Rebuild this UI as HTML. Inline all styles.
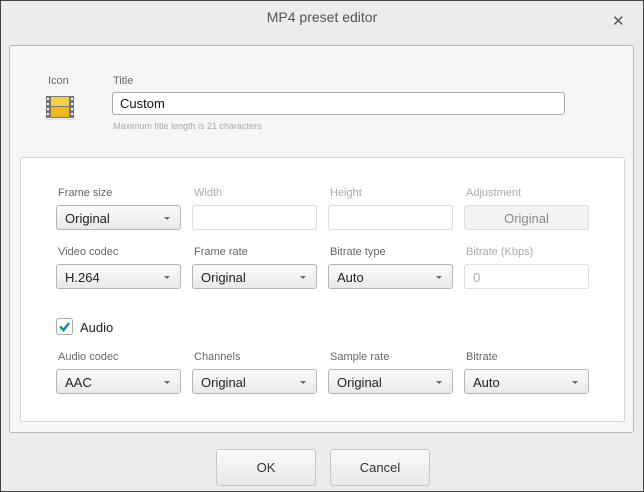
<!DOCTYPE html>
<html><head><style>
*{box-sizing:border-box;margin:0;padding:0}
body{width:644px;height:492px;overflow:hidden;font-family:"Liberation Sans",sans-serif;background:#ececec;position:relative}
.a{position:absolute}
.t{position:absolute;font-size:11px;color:#666}
.d{color:#aaa}
.sel{position:absolute;width:125px;height:25px;border:1px solid #b5b5b5;border-radius:3px;background:linear-gradient(#fbfbfb,#e9e9e9);font-size:13px;color:#222;padding:5px 0 0 8px}
.sel:after{content:"";position:absolute;right:10px;top:11px;border-left:3px solid transparent;border-right:3px solid transparent;border-top:3px solid #666}
.inp{position:absolute;width:125px;height:25px;border:1px solid #ddd;border-radius:3px;background:#fff;font-size:13px;color:#aaa;padding:5px 0 0 8px}
.btn{position:absolute;width:100px;height:37px;border:1px solid #c8c8c8;border-radius:3px;background:linear-gradient(#fafafa,#e8e8e8);font-size:13px;color:#333;text-align:center;line-height:35px}
</style></head><body>
<div class="a" style="left:0;top:9px;width:644px;text-align:center;font-size:14px;color:#555">MP4 preset editor</div>
<div class="a" style="left:612px;top:14px;font-size:15px;color:#555;line-height:1">✕</div>
<div class="a" style="left:9px;top:45px;width:625px;height:388px;border:1px solid #b8b8b8;border-radius:3px;background:#f6f6f6"></div>
<div class="t" style="left:48px;top:75px">Icon</div>
<div class="t" style="left:113px;top:75px">Title</div>
<svg class="a" style="left:45px;top:96px" width="30" height="24"><rect x="1" y="0" width="28" height="22" fill="#777"/><rect x="6" y="1" width="18" height="9" fill="#f7d04a"/><rect x="6" y="11" width="18" height="10" fill="#f0b820"/><g fill="#fff"><rect x="2" y="2" width="2" height="2"/><rect x="2" y="7" width="2" height="2"/><rect x="2" y="12" width="2" height="2"/><rect x="2" y="17" width="2" height="2"/><rect x="26" y="2" width="2" height="2"/><rect x="26" y="7" width="2" height="2"/><rect x="26" y="12" width="2" height="2"/><rect x="26" y="17" width="2" height="2"/></g><rect x="0" y="23" width="30" height="1" fill="#ddd"/></svg>
<div class="a" style="left:112px;top:92px;width:453px;height:23px;border:1px solid #aaa;border-radius:3px;background:#fff;font-size:13px;padding:3px 0 0 7px;color:#111">Custom</div>
<div class="t d" style="left:113px;top:121px;font-size:9px">Maximum title length is 21 characters</div>
<div class="a" style="left:20px;top:157px;width:605px;height:265px;border:1px solid #d5d5d5;border-radius:3px;background:#fff"></div>
<div class="t" style="left:58px;top:187px">Frame size</div>
<div class="t d" style="left:194px;top:187px">Width</div>
<div class="t d" style="left:330px;top:187px">Height</div>
<div class="t d" style="left:466px;top:187px">Adjustment</div>
<div class="sel" style="left:56px;top:205px">Original</div>
<div class="inp" style="left:192px;top:205px"></div>
<div class="inp" style="left:328px;top:205px"></div>
<div class="inp" style="left:464px;top:205px;background:#f3f3f3;color:#888;text-align:center;padding-left:0">Original</div>
<div class="t" style="left:58px;top:246px">Video codec</div>
<div class="t" style="left:194px;top:246px">Frame rate</div>
<div class="t" style="left:330px;top:246px">Bitrate type</div>
<div class="t d" style="left:466px;top:246px">Bitrate (Kbps)</div>
<div class="sel" style="left:56px;top:264px">H.264</div>
<div class="sel" style="left:192px;top:264px">Original</div>
<div class="sel" style="left:328px;top:264px">Auto</div>
<div class="inp" style="left:464px;top:264px">0</div>
<div class="a" style="left:56px;top:318px;width:17px;height:17px;border:1px solid #aaa;border-radius:3px;background:#fff"></div>
<svg class="a" style="left:56px;top:318px" width="17" height="17"><path d="M4 8.5 L7.5 12 L13 5" stroke="#1f8ea6" stroke-width="2.6" fill="none"/></svg>
<div class="a" style="left:80px;top:320px;font-size:13px;color:#222">Audio</div>
<div class="t" style="left:58px;top:351px">Audio codec</div>
<div class="t" style="left:194px;top:351px">Channels</div>
<div class="t" style="left:330px;top:351px">Sample rate</div>
<div class="t" style="left:466px;top:351px">Bitrate</div>
<div class="sel" style="left:56px;top:369px">AAC</div>
<div class="sel" style="left:192px;top:369px">Original</div>
<div class="sel" style="left:328px;top:369px">Original</div>
<div class="sel" style="left:464px;top:369px">Auto</div>
<div class="btn" style="left:216px;top:449px">OK</div>
<div class="btn" style="left:330px;top:449px">Cancel</div>
<div class="a" style="left:0;top:0;width:644px;height:492px;border:1px solid #444"></div>
</body></html>
